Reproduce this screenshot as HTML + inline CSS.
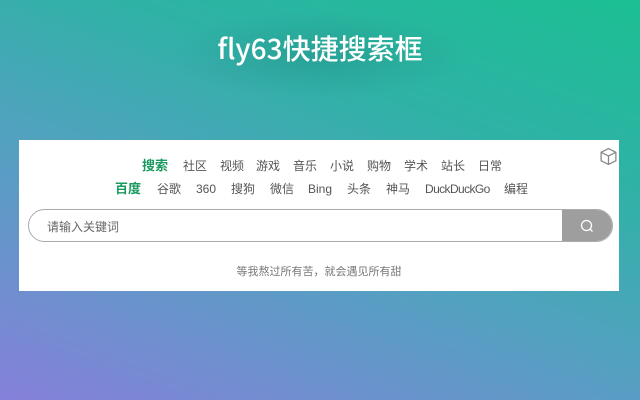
<!DOCTYPE html>
<html><head><meta charset="utf-8"><style>
*{margin:0;padding:0;box-sizing:border-box}
body{width:640px;height:400px;overflow:hidden;position:relative;font-family:"Liberation Sans","Noto Sans CJK SC",sans-serif;
background:linear-gradient(20deg,#8680da 0%,#55a0c2 40%,#2fb2a6 70%,#1bbf93 100%);}
.shade{position:absolute;left:170px;top:10px;width:300px;height:90px;background:radial-gradient(ellipse at center,rgba(20,80,90,0.18),rgba(20,80,90,0) 70%)}
.title{position:absolute;left:0;width:640px;top:28px;text-align:center;color:#fff;font-size:28px;font-family:"Noto Sans CJK SC",sans-serif;font-weight:500;line-height:40px}
.panel{position:absolute;left:19px;top:140px;width:600px;height:151px;background:#fff}
.r{position:absolute;font-size:12px;color:#555;white-space:nowrap;line-height:14px;top:19px}
.r2{top:42px}
.g{color:#1a9a5e;font-weight:bold;font-size:13px;top:18px}
.g.r2{top:41px}
.box{position:absolute;left:9px;top:69px;width:585px;height:33px;border:1px solid #aaa;border-radius:17px;overflow:hidden}
.ph{position:absolute;left:18px;top:8px;font-size:12px;color:#666}
.btn{position:absolute;right:0;top:0;width:50px;height:100%;background:#9e9e9e}
.foot{position:absolute;left:0;width:600px;top:123px;text-align:center;font-size:11px;color:#777}
</style></head><body>
<div class="shade"></div>
<div class="title">fly63快捷搜索框</div>
<div class="panel">
<svg style="position:absolute;left:580px;top:7px" width="19" height="19" viewBox="0 0 18 18" fill="none" stroke="#888" stroke-width="1.2"><path d="M9 1.5 L16 5 V13 L9 16.5 L2 13 V5 Z M2 5 L9 8.5 L16 5 M9 8.5 V16.5"/></svg>
<span class="r g" style="left:123px;top:19px">搜索</span>
<span class="r" style="left:164px">社区</span>
<span class="r" style="left:201px">视频</span>
<span class="r" style="left:237px">游戏</span>
<span class="r" style="left:274px">音乐</span>
<span class="r" style="left:311px">小说</span>
<span class="r" style="left:348px">购物</span>
<span class="r" style="left:385px">学术</span>
<span class="r" style="left:422px">站长</span>
<span class="r" style="left:459px">日常</span>
<span class="r g r2" style="left:96px;top:42px">百度</span>
<span class="r r2" style="left:138px">谷歌</span>
<span class="r r2" style="left:177px">360</span>
<span class="r r2" style="left:212px">搜狗</span>
<span class="r r2" style="left:251px">微信</span>
<span class="r r2" style="left:289px">Bing</span>
<span class="r r2" style="left:328px">头条</span>
<span class="r r2" style="left:367px">神马</span>
<span class="r r2" style="left:406px;letter-spacing:-0.6px">DuckDuckGo</span>
<span class="r r2" style="left:485px">编程</span>
<div class="box"><span class="ph">请输入关键词</span><div class="btn">
<svg style="position:absolute;left:18px;top:9px" width="14" height="14" viewBox="0 0 14 14" fill="none" stroke="#fff" stroke-width="1.3"><circle cx="6.5" cy="6.5" r="5"/><path d="M10 10 L12.5 12.5"/></svg></div></div>
<div class="foot">等我熬过所有苦，就会遇见所有甜</div>
</div>
</body></html>
